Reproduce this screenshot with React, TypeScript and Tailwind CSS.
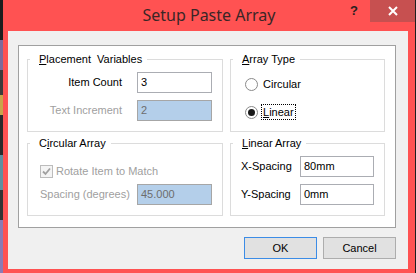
import React from 'react';

const font = { fontFamily: '"Liberation Sans", Arial, sans-serif' };

function GroupBox({ title, children }: { title: React.ReactNode; children: React.ReactNode }) {
  return (
    <fieldset className="h-[80px] border border-[#dcdcdc] min-w-0">
      <legend className="ml-[2px] pl-[9px] pr-[5px] text-[11px] leading-[14px] text-black">{title}</legend>
      {children}
    </fieldset>
  );
}

function TextBox({ value, disabled, w = 'w-[75px]' }: { value: string; disabled?: boolean; w?: string }) {
  return (
    <div
      className={`${w} h-[21px] border flex items-center pl-[3px] text-[11px] ${
        disabled ? 'bg-[#b4cfea] border-[#a6a6a6] text-[#6d6d6d]' : 'bg-white border-[#abadb3] text-black'
      }`}
    >
      {value}
    </div>
  );
}

function Radio({ checked, children }: { checked?: boolean; children: React.ReactNode }) {
  return (
    <div className="flex items-center h-[16px]">
      <div className="w-[13px] h-[13px] rounded-full border border-[#8a8a8a] bg-white flex items-center justify-center">
        {checked && <div className="w-[7px] h-[7px] rounded-full bg-[#1a1a1a]" />}
      </div>
      {children}
    </div>
  );
}

export default function App() {
  return (
    <div className="w-[416px] h-[273px] flex overflow-hidden" style={font}>
      {/* desktop peeking through on the left */}
      <div className="w-[3px] flex flex-col">
        <div className="h-[40px] bg-[#1d1d1d]" />
        <div className="h-[30px] bg-[#7d6a9c]" />
        <div className="h-[25px] bg-[#3b3b3b]" />
        <div className="h-[20px] bg-[#c9a54a]" />
        <div className="h-[40px] bg-[#2a2a2a]" />
        <div className="h-[35px] bg-[#5e8fa0]" />
        <div className="h-[30px] bg-[#333]" />
        <div className="flex-1 bg-[#8a7bb5]" />
      </div>

      {/* window */}
      <div className="flex-1 flex flex-col bg-[#ff5252] border-r border-[#1e1e1e]">
        {/* title bar */}
        <div className="h-[31px] grid grid-cols-[1fr_auto_1fr]">
          <div />
          <div
            className="pt-[4px] text-[16px] leading-[22px] text-[#3a2626]"
            style={{ fontFamily: '"Noto Sans", "Open Sans", sans-serif' }}
          >
            Setup Paste Array
          </div>
          <div className="flex justify-end items-start">
            <div className="mt-[4px] mr-[12px] text-[13px] leading-[14px] font-bold text-[#2a2020]">?</div>
            <div className="w-[45px] h-[22px] bg-[#c75050] flex items-center justify-center">
              <svg width="10" height="10" viewBox="0 0 10 10">
                <path d="M1 1 L9 9 M9 1 L1 9" stroke="#fff" strokeWidth="2" />
              </svg>
            </div>
          </div>
        </div>

        {/* client area */}
        <div className="ml-[5px] mr-[7px] h-[238px] bg-[#f0f0f0] pt-[14px] pl-[10px] pr-[12px]">
          <div className="h-[183px] bg-white border border-[#a0a0a0] pt-[6px] pl-[8px]">
            <div className="grid grid-cols-[196px_155px] gap-x-[7px] gap-y-[4px]">
              <GroupBox
                title={
                  <>
                    <u>P</u>lacement&nbsp; Variables
                  </>
                }
              >
                <div className="pt-[6px] text-[11px]">
                  <div className="flex items-center">
                    <div className="w-[94px] text-right text-black">Item Count</div>
                    <div className="ml-[15px]">
                      <TextBox value="3" />
                    </div>
                  </div>
                  <div className="flex items-center mt-[7px]">
                    <div className="w-[94px] text-right text-[#a0a0a0]">Text Increment</div>
                    <div className="ml-[15px]">
                      <TextBox value="2" disabled />
                    </div>
                  </div>
                </div>
              </GroupBox>

              <GroupBox
                title={
                  <>
                    <u>A</u>rray Type
                  </>
                }
              >
                <div className="pt-[10px] pl-[14px] text-[11px] text-black">
                  <Radio>
                    <span className="ml-[5px]">Circular</span>
                  </Radio>
                  <div className="mt-[12px]">
                    <Radio checked>
                      <span className="ml-[3px] px-[1px] border border-dotted border-black leading-[14px]">
                        <u>L</u>inear
                      </span>
                    </Radio>
                  </div>
                </div>
              </GroupBox>

              <GroupBox
                title={
                  <>
                    C<u>i</u>rcular Array
                  </>
                }
              >
                <div className="pt-[13px] pl-[12px] text-[11px]">
                  <div className="flex items-center h-[16px]">
                    <div className="w-[13px] h-[13px] border border-[#bcbcbc] bg-[#f4f4f4] flex items-center justify-center">
                      <svg width="9" height="9" viewBox="0 0 9 9">
                        <path d="M1 4.5 L3.5 7 L8 1.5" stroke="#a0a0a0" strokeWidth="1.8" fill="none" />
                      </svg>
                    </div>
                    <span className="ml-[3px] text-[#a0a0a0]">Rotate Item to Match</span>
                  </div>
                  <div className="flex items-center mt-[5px]">
                    <div className="w-[97px] text-[#a0a0a0]">Spacing (degrees)</div>
                    <TextBox value="45.000" disabled />
                  </div>
                </div>
              </GroupBox>

              <GroupBox
                title={
                  <>
                    <u>L</u>inear Array
                  </>
                }
              >
                <div className="pt-[6px] pl-[10px] text-[11px] text-black">
                  <div className="flex items-center">
                    <div className="w-[59px]">X-Spacing</div>
                    <TextBox value="80mm" w="w-[74px]" />
                  </div>
                  <div className="flex items-center mt-[7px]">
                    <div className="w-[59px]">Y-Spacing</div>
                    <TextBox value="0mm" w="w-[74px]" />
                  </div>
                </div>
              </GroupBox>
            </div>
          </div>

          {/* buttons */}
          <div className="mt-[9px] flex justify-end gap-[6px] text-[11px] text-black">
            <button className="w-[73px] h-[22px] bg-[#e1e1e1] border border-[#3c8ce6]">OK</button>
            <button className="w-[73px] h-[22px] bg-[#e1e1e1] border border-[#adadad]">Cancel</button>
          </div>
        </div>
      </div>
    </div>
  );
}
